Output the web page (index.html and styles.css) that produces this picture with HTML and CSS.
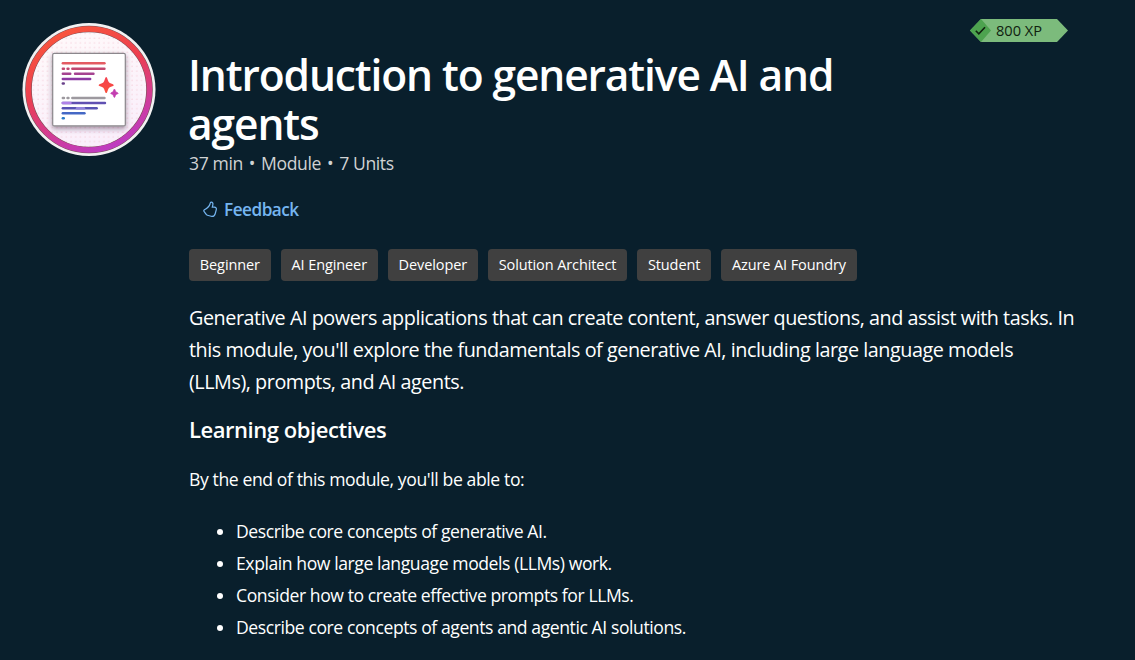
FILE: index.html
```
<!DOCTYPE html>
<html lang="en">
<head>
  <meta charset="UTF-8">
  <meta name="viewport" content="width=device-width, initial-scale=1.0">
  <title>Introduction to generative AI and agents</title>
  <link rel="stylesheet" href="styles.css">
</head>
<body>

  <main class="module">
    <svg class="module-badge" viewBox="0 0 134 134">
      <defs>
        <linearGradient id="ring" x1="0.3" y1="0" x2="0.7" y2="1">
          <stop offset="0" stop-color="#f9553d"/>
          <stop offset="0.4" stop-color="#ec3f50"/>
          <stop offset="0.75" stop-color="#cf3b9c"/>
          <stop offset="1" stop-color="#bd3cc4"/>
        </linearGradient>
        <linearGradient id="face" x1="0" y1="0" x2="0.3" y2="1">
          <stop offset="0" stop-color="#fffafa"/>
          <stop offset="1" stop-color="#faeffb"/>
        </linearGradient>
        <linearGradient id="spark" x1="0" y1="0" x2="0" y2="1">
          <stop offset="0" stop-color="#f4404f"/>
          <stop offset="1" stop-color="#f9503c"/>
        </linearGradient>
        <pattern id="dots" width="4.7" height="4.7" patternUnits="userSpaceOnUse">
          <circle cx="2" cy="2" r="0.7" fill="#f5cbd8"/>
        </pattern>
        <filter id="shadow" x="-20%" y="-20%" width="140%" height="150%">
          <feDropShadow dx="0" dy="2.5" stdDeviation="2.5" flood-color="#39203f" flood-opacity="0.45"/>
        </filter>
      </defs>
      <circle cx="67" cy="67.5" r="66.5" fill="#f2f1f2"/>
      <circle cx="67" cy="67.5" r="60" fill="url(#face)"/>
      <circle cx="67" cy="67.5" r="58" fill="url(#dots)"/>
      <circle cx="67" cy="67.5" r="60.5" fill="none" stroke="#795057" stroke-width="6.6"/>
      <circle cx="67" cy="67.5" r="60.5" fill="none" stroke="url(#ring)" stroke-width="5.4"/>
      <rect x="30.7" y="31.3" width="72.6" height="72.6" rx="1.5" fill="#fff" stroke="#8b878c" stroke-width="1.2" filter="url(#shadow)"/>
      <g fill="none" stroke-width="2.4" stroke-linecap="round">
        <path stroke="#e45b62" d="M40.8 41.2H82.5"/>
        <path stroke="#c14870" d="M40.8 46.7H42M45.5 46.7H46.5M50.3 46.7H82.5"/>
        <path stroke="#a54391" d="M40.8 51.7H48.3M53 51.7H71.5"/>
        <path stroke="#8b39a2" d="M40.8 57H68.2"/>
        <path stroke="#69418a" d="M40.8 61.5H41.8"/>
        <path stroke="#9d999f" d="M40.8 76H42M45.5 76H46.5M50.3 76H82.5"/>
        <path stroke="#6050b2" d="M40.8 81H83"/>
        <path stroke="#b083e8" d="M40.8 81H48.5"/>
        <path stroke="#5752b3" d="M40.8 86.2H74.7"/>
        <path stroke="#9283dc" d="M55 86.2H62"/>
        <path stroke="#4568c5" d="M40.8 91.3H62.5"/>
        <path stroke="#2b7ac9" d="M40.8 96.3H41.8"/>
      </g>
      <path fill="url(#spark)" d="M83.3 56q.9-1.8 1.8 0l1.2 3.2q.6 1.5 2.1 2.1l2.6.9q1.8.9 0 1.8l-2.6.9q-1.5.6-2.1 2.1l-1.2 3.2q-.9 1.8-1.8 0l-1.2-3.2q-.6-1.5-2.1-2.1l-2.6-.9q-1.8-.9 0-1.8l2.6-.9q1.5-.6 2.1-2.1z"/>
      <path fill="#c33eb0" stroke="#c33eb0" stroke-width=".6" d="M91.9 67.6q.5-1 1 0l.7 1.7q.3.7 1 1l1.2.5q1 .5 0 1l-1.2.5q-.7.3-1 1l-.7 1.7q-.5 1-1 0l-.7-1.7q-.3-.7-1-1l-1.2-.5q-1-.5 0-1l1.2-.5q.7-.3 1-1z"/>
    </svg>

    <div class="module-content">
      <header class="module-header">
        <h1>Introduction to generative AI and agents</h1>
        <div class="xp-tag">
          <svg class="xp-shape" viewBox="0 0 98 23">
            <path fill="#7cbb7c" d="M11 0H87L98 11.5L87 23H11L0 11.5Z"/>
            <path fill="#4da34f" d="M11 0L21 11.5L11 23L0 11.5Z"/>
            <path fill="none" stroke="#10220f" stroke-width="1.6" d="M5.8 11.8L8.8 14.8L15 8.2"/>
          </svg>
          <span class="xp-text">800 XP</span>
        </div>
      </header>

      <p class="module-meta"><span>37 min</span><span>•</span><span>Module</span><span>•</span><span>7 Units</span></p>

      <button class="feedback">
        <svg class="feedback-icon" viewBox="0 0 16 18">
          <path d="M8.7 1.2c1.5-.2 2.2 1.2 1.8 2.8L9.9 6.5h2.2c1.6 0 2.5 1 2.1 2.6l-1.2 4.4c-.6 2.2-2.2 3.2-4.3 2.7l-4-1.1c-.8-.2-1.2-.7-1.7-1.5L1.1 11c-.4-.7-.3-1.3.4-1.7C4.7 7.5 6.7 6 7.4 3.4c.3-1.1.3-2 1.3-2.2z"/>
        </svg>
        <span>Feedback</span>
      </button>

      <ul class="tags">
        <li>Beginner</li>
        <li>AI Engineer</li>
        <li>Developer</li>
        <li>Solution Architect</li>
        <li>Student</li>
        <li>Azure AI Foundry</li>
      </ul>

      <p class="summary">Generative AI powers applications that can create content, answer questions, and assist with tasks. In this module, you'll explore the fundamentals of generative AI, including large language models (LLMs), prompts, and AI agents.</p>

      <h2>Learning objectives</h2>
      <p class="intro">By the end of this module, you'll be able to:</p>
      <ul class="objectives">
        <li>Describe core concepts of generative AI.</li>
        <li>Explain how large language models (LLMs) work.</li>
        <li>Consider how to create effective prompts for LLMs.</li>
        <li>Describe core concepts of agents and agentic AI solutions.</li>
      </ul>
    </div>
  </main>

</body>
</html>
```
FILE: styles.css
```
body {
  font-family: "Open Sans", "Noto Sans", sans-serif;
  margin: 0;
  background-color: #091f2c;
  color: #fff;
  font-size: 17.6px;
  letter-spacing: -0.4px;
}

h1, h2, p, ul {
  margin: 0;
  padding: 0;
}

.module {
  display: flex;
  align-items: flex-start;
  gap: 33px;
  padding: 22px 58px 0 22px;
  height: 638px;
  overflow: hidden;
}

.module-badge {
  flex: none;
  width: 134px;
  height: 134px;
  overflow: visible;
}

.module-content {
  flex: 1;
}

.module-header {
  display: flex;
  justify-content: space-between;
  align-items: flex-start;
  margin-right: 9px;
}

h1 {
  width: 680px;
  margin-left: -1px;
  padding-top: 28px;
  font-size: 42.5px;
  font-weight: 600;
  line-height: 49px;
  letter-spacing: -1.1px;
}

.xp-tag {
  display: grid;
  width: 98px;
  height: 23px;
  margin-top: -3px;
  color: #10220f;
}

.xp-shape,
.xp-text {
  grid-area: 1 / 1;
}

.xp-text {
  padding-left: 26px;
  font-size: 14.6px;
  line-height: 23px;
  letter-spacing: 0;
}

.module-meta {
  display: flex;
  gap: 6px;
  padding-top: 2px;
  color: #d0d2d3;
  line-height: 26px;
}

.feedback {
  display: flex;
  align-items: center;
  gap: 6px;
  height: 40px;
  margin: 13px 0 0;
  padding: 0 14px;
  border: none;
  background: none;
  color: #75b5f0;
  font: inherit;
  font-size: 17.2px;
  font-weight: 600;
  letter-spacing: -0.5px;
  cursor: pointer;
}

.feedback-icon {
  width: 15px;
  height: 17px;
  fill: none;
  stroke: #75b5f0;
  stroke-width: 1.3;
}

.tags {
  display: flex;
  gap: 10px;
  margin-top: 20px;
  list-style: none;
}

.tags li {
  padding: 0 10.8px;
  border-radius: 4px;
  background-color: #404040;
  font-size: 14.5px;
  line-height: 32px;
  letter-spacing: -0.1px;
}

.summary {
  margin-top: 21px;
  font-size: 19.8px;
  line-height: 32px;
  letter-spacing: -0.46px;
}

h2 {
  margin-top: 16px;
  font-size: 22px;
  font-weight: 600;
  line-height: 30px;
  letter-spacing: -0.45px;
}

.intro {
  margin-top: 19px;
  line-height: 32px;
}

.objectives {
  margin-top: 20px;
  padding-left: 47px;
  line-height: 32px;
  letter-spacing: -0.43px;
}
```
